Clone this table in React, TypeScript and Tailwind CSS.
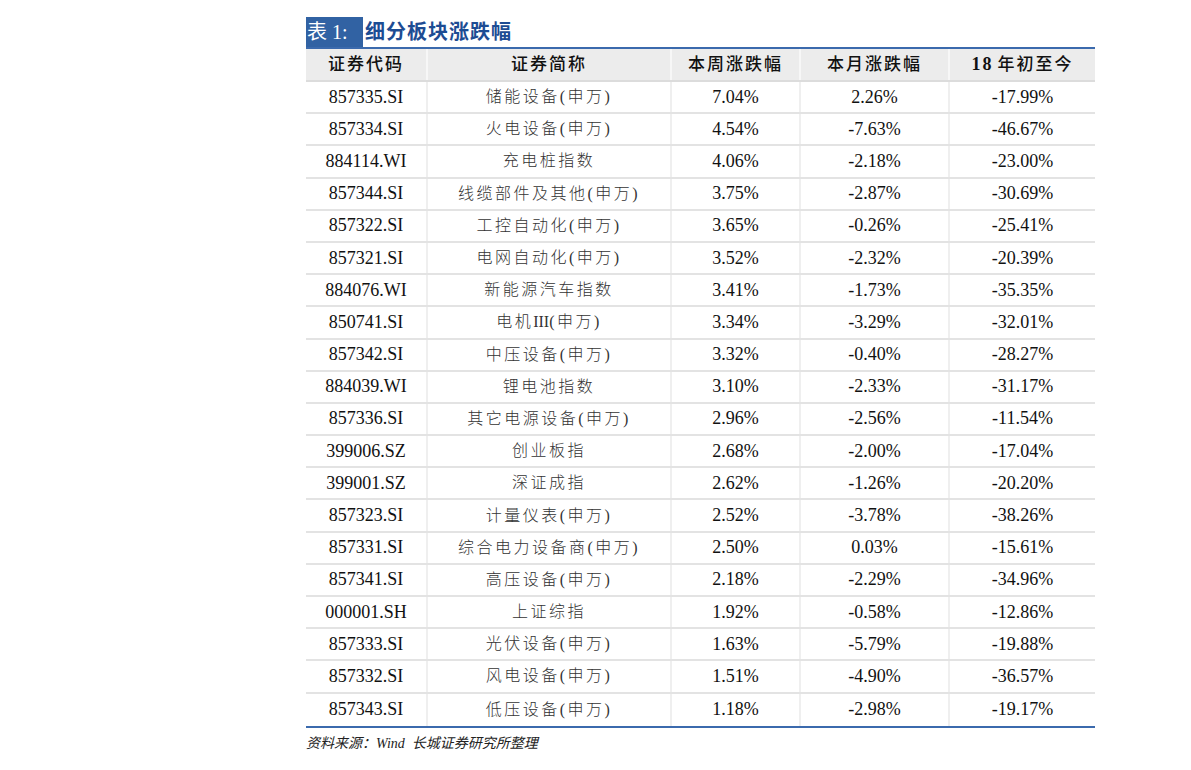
const ROWS: [string, string, string, string, string][] = [
  ['857335.SI', '储能设备(申万)', '7.04%', '2.26%', '-17.99%'],
  ['857334.SI', '火电设备(申万)', '4.54%', '-7.63%', '-46.67%'],
  ['884114.WI', '充电桩指数', '4.06%', '-2.18%', '-23.00%'],
  ['857344.SI', '线缆部件及其他(申万)', '3.75%', '-2.87%', '-30.69%'],
  ['857322.SI', '工控自动化(申万)', '3.65%', '-0.26%', '-25.41%'],
  ['857321.SI', '电网自动化(申万)', '3.52%', '-2.32%', '-20.39%'],
  ['884076.WI', '新能源汽车指数', '3.41%', '-1.73%', '-35.35%'],
  ['850741.SI', '电机III(申万)', '3.34%', '-3.29%', '-32.01%'],
  ['857342.SI', '中压设备(申万)', '3.32%', '-0.40%', '-28.27%'],
  ['884039.WI', '锂电池指数', '3.10%', '-2.33%', '-31.17%'],
  ['857336.SI', '其它电源设备(申万)', '2.96%', '-2.56%', '-11.54%'],
  ['399006.SZ', '创业板指', '2.68%', '-2.00%', '-17.04%'],
  ['399001.SZ', '深证成指', '2.62%', '-1.26%', '-20.20%'],
  ['857323.SI', '计量仪表(申万)', '2.52%', '-3.78%', '-38.26%'],
  ['857331.SI', '综合电力设备商(申万)', '2.50%', '0.03%', '-15.61%'],
  ['857341.SI', '高压设备(申万)', '2.18%', '-2.29%', '-34.96%'],
  ['000001.SH', '上证综指', '1.92%', '-0.58%', '-12.86%'],
  ['857333.SI', '光伏设备(申万)', '1.63%', '-5.79%', '-19.88%'],
  ['857332.SI', '风电设备(申万)', '1.51%', '-4.90%', '-36.57%'],
  ['857343.SI', '低压设备(申万)', '1.18%', '-2.98%', '-19.17%'],
]

const COLS = 'grid grid-cols-[122px_244px_129px_149px_145px]'
const serif = { fontFamily: '"Liberation Serif", "Noto Sans CJK SC", serif' }

// "III" is set tight in the source, the rest of the name is spaced out
function Name({ text }: { text: string }) {
  const parts = text.split('III')
  if (parts.length === 1) return <>{text}</>
  return (
    <>
      {parts[0]}
      <span className="tracking-normal">III</span>
      {parts[1]}
    </>
  )
}

export default function App() {
  return (
    <div className="min-h-[770px] w-[1191px] bg-white" style={serif}>
      <div className="pl-[306px] pt-[17px]">
        <div className="flex h-[30px] items-center">
          <span className="flex h-[30px] w-[57px] items-center pl-[1px] text-[20px] text-white bg-[#3162a3]">表 1:</span>
          <span className="ml-[2px] text-[20px] font-bold tracking-[1px] text-[#1d4c93]">细分板块涨跌幅</span>
        </div>
        <div className="w-[789px] border-t-[2px] border-b-[2px] border-[#3b6aad]">
          <div className={`${COLS} h-[33px] bg-[#ececec] border-b-[2px] border-[#dcdcdc] text-[17px] font-medium text-[#111]`}>
            <div className="flex items-center justify-center tracking-[2px] border-r-[2px] border-[#f7f7f7]">证券代码</div>
            <div className="flex items-center justify-center tracking-[2px] border-r-[2px] border-[#f7f7f7]">证券简称</div>
            <div className="flex items-center justify-center tracking-[2px] border-r-[2px] border-[#f7f7f7]">本周涨跌幅</div>
            <div className="flex items-center justify-center tracking-[2px] border-r-[2px] border-[#f7f7f7]">本月涨跌幅</div>
            <div className="flex items-center justify-center tracking-[2px]">
              <b className="mr-[4px] text-[18px]">18</b>年初至今
            </div>
          </div>
          {ROWS.map((r, i) => (
            <div
              key={r[0]}
              className={`${COLS} h-[32.2px] text-[18px] text-[#111] ${i < ROWS.length - 1 ? 'border-b-[2px] border-[#e3e3e3]' : ''}`}
            >
              <div className="flex items-center justify-center border-r-[2px] border-[#efefef]">{r[0]}</div>
              <div className="flex items-center justify-center border-r-[2px] border-[#efefef] text-[16px] font-light tracking-[2.5px] text-[#333]">
                <Name text={r[1]} />
              </div>
              <div className="flex items-center justify-center border-r-[2px] border-[#efefef]">{r[2]}</div>
              <div className="flex items-center justify-center border-r-[2px] border-[#efefef]">{r[3]}</div>
              <div className="flex items-center justify-center">{r[4]}</div>
            </div>
          ))}
        </div>
        <div className="mt-[5px] text-[14px] italic text-[#222]">资料来源：Wind&nbsp; 长城证券研究所整理</div>
      </div>
    </div>
  )
}
